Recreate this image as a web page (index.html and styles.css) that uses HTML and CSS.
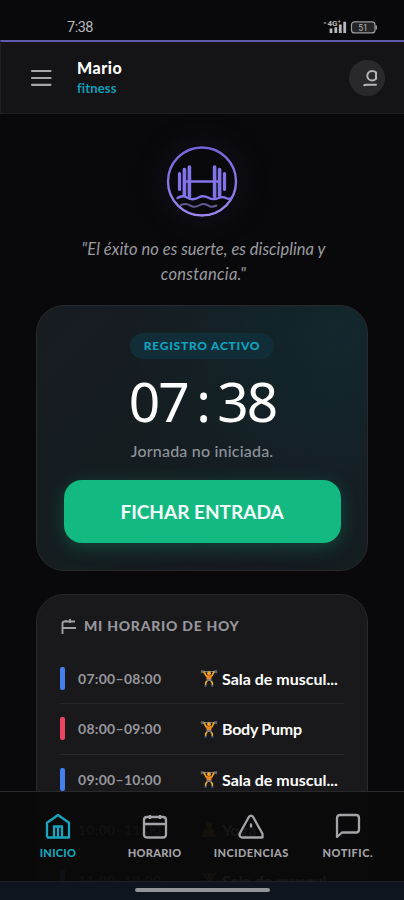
FILE: index.html
```
<!DOCTYPE html>
<html lang="es">
<head>
<meta charset="utf-8">
<meta name="viewport" content="width=device-width, initial-scale=1">
<title>Mario fitness</title>
<link rel="stylesheet" href="styles.css">
</head>
<body>
<svg class="defs" width="0" height="0" aria-hidden="true">
  <symbol id="lifter" viewBox="0 0 18 18">
    <path d="M1.5 2.5L16.5 2.5" stroke="#777b80" stroke-width="1"/>
    <path d="M1.5 1.2v3M3 1v3M15 1v3M16.5 1.2v3" stroke="#62666c" stroke-width="1.3"/>
    <path d="M3.8 2.5L6.2 6.8 9 8l2.8-1.2 2.4-4.3" fill="none" stroke="#f0a51e" stroke-width="1.7"/>
    <circle cx="9" cy="4.2" r="1.9" fill="#f8a820"/>
    <path d="M6 6.3h6l-.9 5H6.9z" fill="#ee8420"/>
    <path d="M6.8 10h4.4l.4 2H6.4z" fill="#777f8b"/>
    <path d="M7.2 12l-1.5 1.6v3M10.8 12l1.5 1.6v3" fill="none" stroke="#efae28" stroke-width="1.6"/>
    <path d="M4.5 17h2M11.5 17h2" stroke="#355da0" stroke-width="1.3"/>
  </symbol>
</svg>
<div class="phone">
  <div class="status">
    <span class="clock">7:38</span>
    <svg class="signal" width="56" height="16" viewBox="0 0 56 16">
      <path d="M.3 4.500L2 3l1.700 1.500z" fill="#b8b8bb"/>
      <text x="4.500" y="7" class="net">4G⁺</text>
      <path d="M8 9.500v4.500M12.800 8.200V14M17.300 5.500v8.500M21.700 2.800V14" stroke="#b8b8bb" stroke-width="2.800"/>
      <rect x="28.500" y="2.900" width="23.500" height="11" rx="3" fill="#242426" stroke="#9a9a9d" stroke-width="1.200"/>
      <path d="M53.200 6.400v4" stroke="#9a9a9d" stroke-width="1.600"/>
      <text x="35.200" y="11.600" class="batt">51</text>
    </svg>
  </div>
  <header class="top">
    <svg class="menu" width="22" height="18" viewBox="0 0 22 18"><path d="M2 2h18.500M2 9h18.500M2 15.800h18.500" stroke="#a6a6aa" stroke-width="2.200" stroke-linecap="round"/></svg>
    <div class="who"><div class="name">Mario</div><div class="brand">fitness</div></div>
    <div class="avatar">
      <svg width="14" height="17" viewBox="0 0 14 17" fill="none" stroke="#b5b5b9" stroke-width="2"><path d="M13 2.500C12 1.400 10.700 1 9 1a4.700 4.700 0 1 0 0 9.400c1.700 0 3-.5 4-1.600zM.7 15.800c.7-.9 1.500-1 2.500-1h10.600"/></svg>
    </div>
  </header>
  <main class="content">
    <svg class="logo" width="72" height="72" viewBox="0 0 72 72" fill="none" stroke="#8173ea" stroke-linecap="round">
      <defs><linearGradient id="ring" x1="0" y1="0" x2="0" y2="1"><stop offset="0" stop-color="#7565db"/><stop offset="1" stop-color="#9b86ef"/></linearGradient></defs>
      <circle cx="36" cy="36.500" r="34" stroke="url(#ring)" stroke-width="2.400"/>
      <path d="M20 36.500h32" stroke-width="2.600"/>
      <path d="M13.500 28.500v16M58.500 28.500v16" stroke-width="3.200"/>
      <path d="M18.400 24.500v26M53.600 24.500v26M23.400 22v29.500M48.600 22v29.500" stroke-width="3.600"/>
      <path d="M11.500 53c4-2.800 6.500-2.400 10-.2s7 1.900 11-.3 6.500-1.600 10 .3 7 1.700 10 .2 5.500-1.200 8 .3q2.500 1.300 5-.3" stroke-width="2.300"/>
      <path d="M15 60c4-1.800 6-1.500 9.500.7s6.500 1 9.500-.7 6-1 8.500.7 6 .800 8-.2" stroke="#62588f" stroke-width="2"/>
    </svg>
    <p class="quote">"El éxito no es suerte, es disciplina y<br><span class="wide">constancia."</span></p>
    <section class="card punch">
      <div class="pill"><span>REGISTRO ACTIVO</span></div>
      <div class="time"><span>0</span><span>7</span><span>:</span><span>3</span><span>8</span></div>
      <div class="state">Jornada no iniciada.</div>
      <button class="enter">FICHAR ENTRADA</button>
    </section>
    <section class="card schedule">
      <h2><svg width="16" height="15" viewBox="0 0 16 15" fill="none" stroke="#a0a0a5" stroke-width="1.900"><path d="M1.500 15V4.500q0-2 2-2H14M9 0v4M5 1v2.500M1.500 9H15"/></svg><span>MI HORARIO DE HOY</span></h2>
      <div class="row"><i class="bar"></i><span class="hours">07:00–08:00</span><svg class="emoji"><use href="#lifter"/></svg><b class="sala">Sala de muscul...</b></div>
      <div class="row"><i class="bar red"></i><span class="hours">08:00–09:00</span><svg class="emoji"><use href="#lifter"/></svg><b class="pump">Body Pump</b></div>
      <div class="row"><i class="bar"></i><span class="hours">09:00–10:00</span><svg class="emoji"><use href="#lifter"/></svg><b class="sala">Sala de muscul...</b></div>
      <div class="row"><i class="bar hidden"></i><span class="hours">10:00–11:00</span><svg class="emoji" viewBox="0 0 18 18"><circle cx="9" cy="4" r="3" fill="#f0a51e"/><path d="M6 7h6l5 9H1z" fill="#ee8420"/></svg><b>Yoga</b></div>
      <div class="row"><i class="bar"></i><span class="hours">11:00–12:00</span><svg class="emoji"><use href="#lifter"/></svg><b class="sala">Sala de muscul...</b></div>
    </section>
  </main>
  <div class="dock">
    <nav class="tabs">
      <a class="tab active"><svg width="26" height="26" viewBox="0 0 26 26"><path d="M2 24.500V9.800L13 2l11 7.800v14.700H2M9 24V13.500h8V24M13 14v10"/></svg><span class="t1">INICIO</span></a>
      <a class="tab"><svg width="26" height="26" viewBox="0 0 26 26"><path d="M5 4h16q3 0 3 3v14.500q0 3-3 3H5q-3 0-3-3V7q0-3 3-3zM2 11h22M8 2v4M18 2v4"/></svg><span class="t2">HORARIO</span></a>
      <a class="tab"><svg width="26" height="26" viewBox="0 0 26 26"><path d="M11 3.800q2-2.500 4 0l9.500 17v3.700H4q-3.500-.5-2-4.500zM13 10.500v4"/></svg><span class="t3">INCIDENCIAS</span></a>
      <a class="tab"><svg width="26" height="26" viewBox="0 0 26 26"><path d="M2 24V5q0-3 3-3h16q3 0 3 3v11.500q0 3-3 3H7z"/></svg><span class="t4">NOTIFIC.</span></a>
    </nav>
    <div class="gesture"><span></span></div>
  </div>
</div>
</body>
</html>
```
FILE: styles.css
```
* { box-sizing: border-box; }
body { margin: 0; background: #09090b; font-family: Lato, "Open Sans", sans-serif; color: #fff; }
.defs { position: absolute; }
.phone { height: 900px; overflow: hidden; position: relative; display: flex; flex-direction: column; }
.status { height: 40px; flex: none; padding: 19px 25px 0 67px; display: flex; justify-content: space-between; color: #b8b8bb; font: 14.500px/18px Roboto, sans-serif; }
.clock { letter-spacing: -.5px; }
.net { font: bold 8px Roboto, sans-serif; fill: #b8b8bb; }
.batt { font: 8.500px Roboto, sans-serif; fill: #b8b8bb; }
.top { height: 74px; flex: none; border-top: 2px solid #5f59a9; border-bottom: 1px solid #202023; border-left: 1px solid #202023; background: #141417; display: flex; align-items: center; padding: 0 19px 0 29px; }
.menu { flex: none; }
.who { margin-left: 25px; flex: 1; }
.name { font-size: 16px; line-height: 20px; font-weight: 900; letter-spacing: .5px; }
.brand { font-size: 13px; line-height: 20px; font-weight: 700; color: #109fb9; letter-spacing: .15px; }
.avatar { width: 36px; height: 36px; border-radius: 50%; background: #29292c; display: flex; align-items: center; justify-content: flex-end; padding: 2px 8px 0 0; }
.content { padding: 32px 36px 0; display: flex; flex-direction: column; align-items: center; }
.logo { flex: none; border-radius: 50%; box-shadow: 0 0 40px rgba(99, 91, 190, .12); margin-top: -1px; }
.quote { margin: 20px 0 0 3px; height: 50px; text-align: center; font-size: 16.500px; line-height: 25px; font-style: italic; color: #9b9ba0; white-space: nowrap; letter-spacing: .03px; }
.wide { letter-spacing: .3px; }
.card { width: 332px; flex: none; border: 1px solid #29292c; border-radius: 28px; }
.punch { height: 266px; margin-top: 18px; padding: 27px; display: flex; flex-direction: column; align-items: center; background: radial-gradient(circle at 92% 12%, #12272d 0, rgba(18, 39, 45, 0) 56%), linear-gradient(135deg, #171c22 0%, #141d20 50%, #161b22 75%, #141d20 100%); }
.pill { width: 144px; height: 26px; border-radius: 13px; background: #112d37; text-align: center; font-size: 12px; line-height: 26px; font-weight: 900; color: #10a3bf; letter-spacing: .75px; white-space: nowrap; }
.time { height: 78px; margin: 5px 0 0 3px; display: grid; grid-template-columns: repeat(5, 29.500px); font: 55px/74px "Noto Sans", sans-serif; }
.time span { display: flex; justify-content: center; }
.state { height: 22px; margin-top: -2px; font-size: 16px; line-height: 22px; color: #8f929b; font-weight: 500; letter-spacing: .2px; white-space: nowrap; }
.enter { margin-top: 18px; width: 277px; height: 63px; border: 0; border-radius: 18px; background: #12b981; color: #f5fffb; font: bold 19px/63px Lato, sans-serif; padding: 0; box-shadow: 0 4px 18px rgba(16, 185, 129, .28); flex: none; }
.schedule { height: 370px; margin-top: 23px; padding: 21px 23px; background: #19191b; }
h2 { margin: 0 0 17.500px; height: 20px; font-size: 14px; line-height: 20px; color: #96969c; font-weight: 900; letter-spacing: .75px; display: flex; align-items: center; gap: 7px; white-space: nowrap; }
h2 svg { margin-left: 1px; }
.row { height: 50.500px; border-bottom: 1px solid #29292c; display: flex; align-items: center; white-space: nowrap; }
.bar { width: 5px; height: 23px; border-radius: 2px; background: #4380ed; flex: none; }
.bar.red { background: #ee4261; }
.bar.hidden { visibility: hidden; }
.hours { width: 122px; margin-left: 13px; font-size: 14px; color: #96969c; font-weight: 700; letter-spacing: .28px; }
.emoji { width: 18px; height: 18px; flex: none; }
.row b { margin-left: 4px; font-size: 16px; }
.row .pump { letter-spacing: -.25px; }
.dock { position: absolute; left: 0; right: 0; bottom: 0; height: 109px; }
.tabs { height: 90px; background: rgba(9, 9, 11, .95); border-top: 1px solid #29292c; display: grid; grid-template-columns: repeat(4, 96.600px); padding-left: 9.700px; }
.tab { display: flex; flex-direction: column; align-items: center; padding-top: 21px; color: #a3a3a8; font-size: 11px; line-height: 14px; font-weight: 900; gap: 7px; }
.tab svg { fill: none; stroke: currentColor; stroke-width: 2.300; stroke-linejoin: round; }
.t1 { letter-spacing: .3px; }
.t2 { letter-spacing: .3px; }
.t3 { letter-spacing: .45px; }
.t4 { letter-spacing: .5px; }
.active { color: #18a5bd; }
.gesture { height: 19px; background: #0e151e; border-top: 1px solid #1b222a; padding-top: 6px; }
.gesture span { display: block; width: 135px; height: 4px; border-radius: 2px; background: #929499; margin: 0 auto; }
```
